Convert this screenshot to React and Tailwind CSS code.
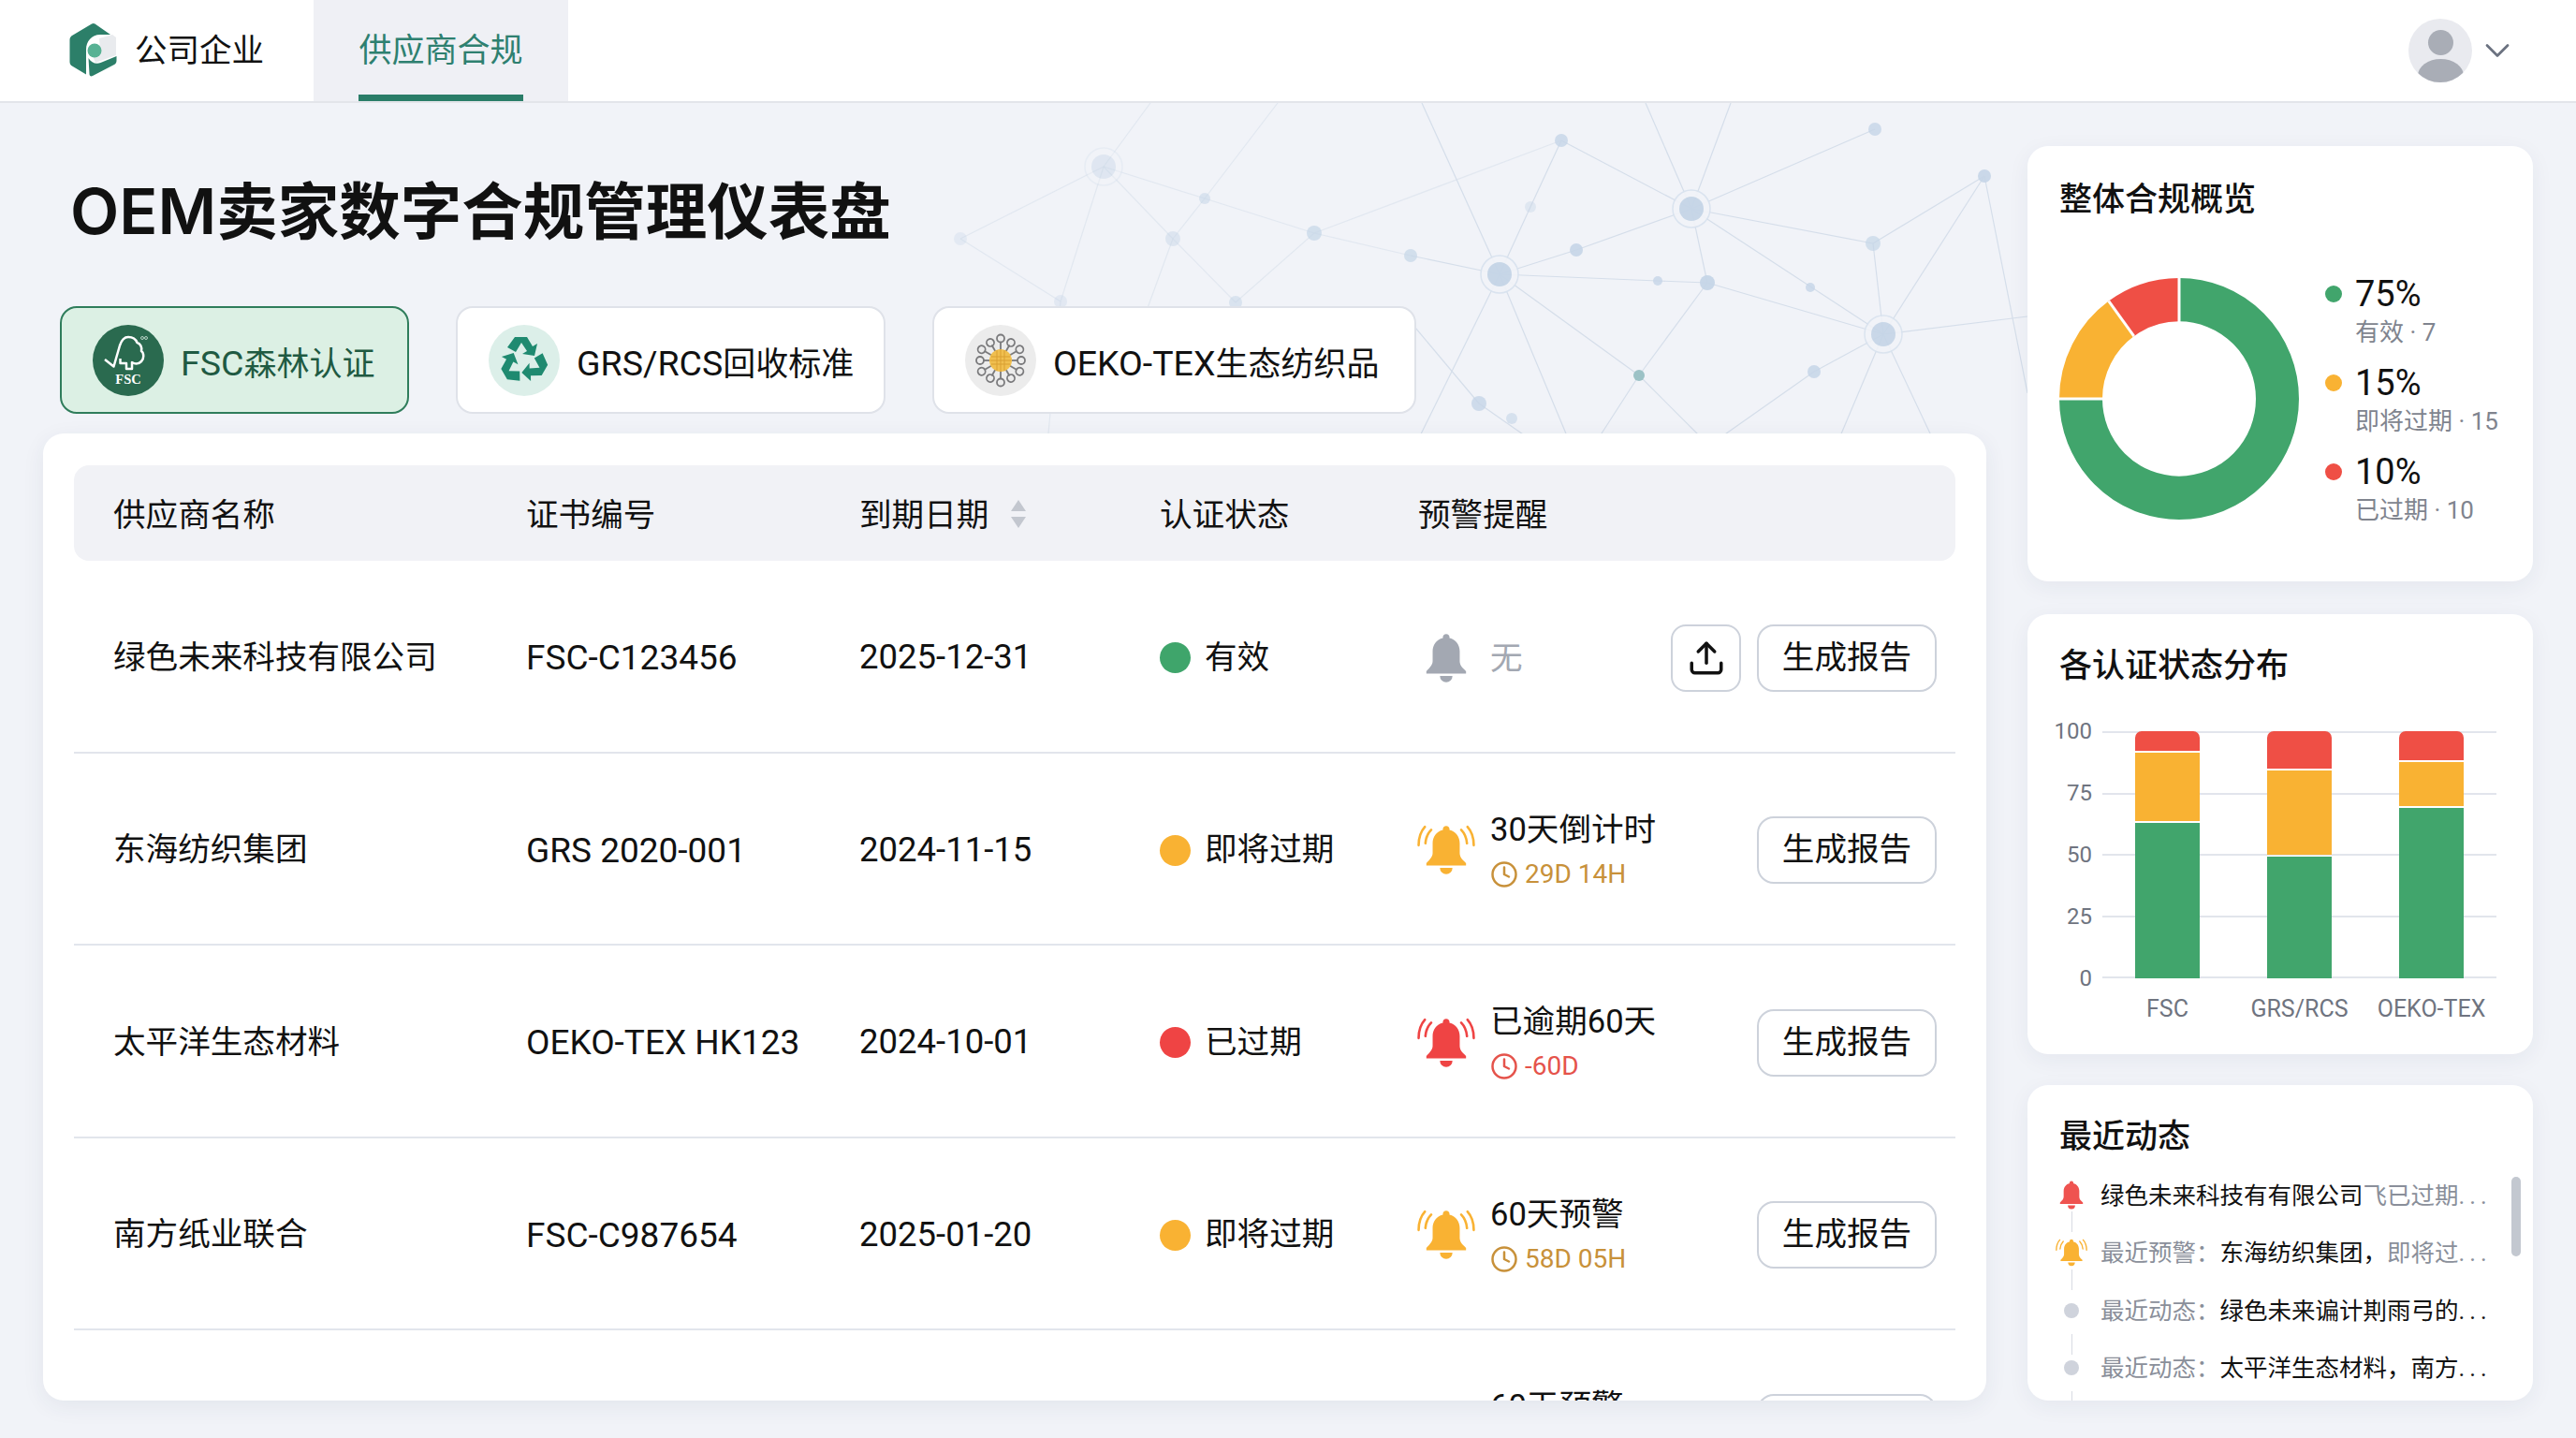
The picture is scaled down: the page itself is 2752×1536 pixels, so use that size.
import React from 'react'
import { ChevronDown, Clock, Upload } from 'lucide-react'

const nodes = [
  [1179, 178, 13, 1, 0.4], [1287, 212, 6, 0, 0.55], [1404, 249, 8, 0, 0.7], [1253, 255, 8, 0, 0.45],
  [1026, 255, 7, 0, 0.3], [1133, 322, 7, 0, 0.35], [1320, 323, 7, 0, 0.55], [1507, 273, 7, 0, 0.7],
  [1668, 150, 7, 0, 0.8], [1807, 223, 13, 1, 0.95], [2003, 138, 7, 0, 0.8], [2120, 188, 7, 0, 0.9],
  [2001, 260, 8, 0, 0.7], [1635, 221, 6, 0, 0.4], [1684, 267, 7, 0, 0.9], [1602, 293, 13, 1, 0.95],
  [1771, 300, 5, 0, 0.8], [1824, 302, 8, 0, 0.95], [1934, 307, 5, 0, 0.8], [2012, 357, 13, 1, 0.9],
  [1751, 401, 6, 0, 1], [1938, 397, 7, 0, 0.85], [1580, 431, 8, 0, 0.8], [1615, 447, 6, 0, 0.6],
]

const edges = [
  [1179, 178, 1229, 110], [1179, 178, 1026, 255], [1179, 178, 1133, 322], [1179, 178, 1253, 255], [1179, 178, 1287, 212],
  [1287, 212, 1365, 110], [1287, 212, 1253, 255], [1287, 212, 1404, 249], [1253, 255, 1320, 323], [1253, 255, 1200, 400],
  [1026, 255, 1133, 322], [1133, 322, 1120, 463], [1320, 323, 1404, 249], [1404, 249, 1668, 150], [1404, 249, 1507, 273],
  [1507, 273, 1602, 293], [1668, 150, 1807, 223], [1668, 150, 1635, 221], [1635, 221, 1602, 293], [1519, 110, 1602, 293],
  [1758, 110, 1807, 223], [1849, 110, 1807, 223], [1807, 223, 2003, 138], [1807, 223, 2001, 260], [1807, 223, 1684, 267],
  [1684, 267, 1602, 293], [1807, 223, 1824, 302], [1807, 223, 2012, 357], [1602, 293, 1771, 300], [1771, 300, 1824, 302],
  [1824, 302, 2012, 357], [1824, 302, 1751, 401], [1602, 293, 1751, 401], [1602, 293, 1510, 480], [1602, 293, 1680, 480],
  [2001, 260, 2120, 188], [2001, 260, 2012, 357], [2120, 188, 2012, 357], [2120, 188, 2166, 420], [2012, 357, 2166, 338],
  [2012, 357, 1938, 397], [1938, 397, 1820, 480], [2012, 357, 1960, 480], [2012, 357, 2070, 480], [1751, 401, 1700, 480],
  [1751, 401, 1830, 480], [1512, 350, 1580, 431], [1580, 431, 1650, 480],
]

function Network() {
  return (
    <svg className="absolute inset-0 w-[2166px] h-[1426px]" viewBox="0 110 2166 1426" fill="none">
      {edges.map(([x1, y1, x2, y2], i) => (
        <line key={i} x1={x1} y1={y1} x2={x2} y2={y2} stroke="#d5deea" strokeWidth="1.200" opacity={x1 < 1450 ? 0.55 : 1} />
      ))}
      {nodes.map(([x, y, r, ring, o], i) => (
        <g key={i} opacity={o}>
          {ring === 1 && <circle cx={x} cy={y} r={r + 7} stroke="#d9e3ef" strokeWidth="1.500" fill="#f1f3f8" />}
          <circle cx={x} cy={y} r={r} fill={i === 20 ? '#9cc2c6' : '#c5d5e7'} />
        </g>
      ))}
    </svg>
  )
}

function Logo() {
  return (
    <svg viewBox="0 0 80 75" className="w-[80px] h-[75px] shrink-0">
      <path d="M38 8.500 17 21c-1.500 1-2.500 2.500-2.500 4.500v23.500c0 2 1 3.500 2.500 4.500l15 9V36c0-9 6-16 15-16h11L41.500 8.500c-1-.800-2.500-.800-3.500 0z" fill="#2c7f69" />
      <path d="M46 24 60 20l4 3v19l-22 8-3-7c6 2 8-1 8-6z" fill="#e9ebee" />
      <circle cx="41" cy="37" r="7.500" fill="#58b294" />
      <path d="M34.500 45c3 5 8 7 13 5l17-7v5c0 1.500-.800 3-2 3.800L39 64c-2 1-3.500 0-3.500-2z" fill="#2c7f69" />
    </svg>
  )
}

function Bell({ color, ring, className }) {
  return (
    <svg viewBox="0 0 60 52" className={className} fill="none">
      <path d="M30 1c-2 0-3.400 1.400-3.400 3.200v1C19.800 6.800 16 12.500 16 19v10c0 4-2.500 6.500-6.500 10.500V42h41v-2.500C46 35.500 44 33 44 29V19c0-6.500-3.800-12.200-10.600-13.800v-1C33.400 2.400 32 1 30 1z" fill={color} />
      <path d="M23.500 44.500h13a6.500 6.500 0 0 1-13 0z" fill={color} />
      {ring && (
        <g stroke={color} strokeWidth="2.500" strokeLinecap="round">
          <path d="M8 2C3.500 7 1.500 13 1.500 21" />
          <path d="M14.500 5C10.500 9 9 13.500 8.500 19" />
          <path d="M52 2c4.500 5 6.500 11 6.500 19" />
          <path d="M45.500 5c4 4 5.500 8.500 6 14" />
        </g>
      )}
    </svg>
  )
}

function FscIcon() {
  return (
    <div className="w-[76px] h-[76px] rounded-full bg-[#2a6a4f] flex items-center justify-center shrink-0">
      <svg viewBox="0 0 76 76" className="w-[76px] h-[76px]" fill="none">
        <path d="M13 37 22.500 44.500 29 22C31 16 34 13 38 13c4 0 8 2 9.500 6 3.500 1 5.500 5 4.500 9 3 2 3 8 0 11-3 3-7 3-10 1v7h-6v-6h-6.500v-5" stroke="#fff" strokeWidth="2.500" strokeLinejoin="round" />
        <text x="38" y="63" textAnchor="middle" fill="#fff" fontSize="14.500" fontWeight="700" fontFamily="'Liberation Serif', serif">FSC</text>
        <circle cx="53" cy="14" r="1.500" stroke="#d8e8df" strokeWidth="0.800" />
        <circle cx="57" cy="14" r="1.500" stroke="#d8e8df" strokeWidth="0.800" />
      </svg>
    </div>
  )
}

function RecycleIcon() {
  const arrow = 'M28 13 41 13 47 23 52 20 49 33 36 31 41 28 35 19 29 29 20 24Z'
  return (
    <div className="w-[76px] h-[76px] rounded-full bg-[#dcefe9] flex items-center justify-center shrink-0">
      <svg viewBox="0 0 76 76" className="w-[76px] h-[76px]" fill="#1f8a70">
        <path d={arrow} />
        <path d={arrow} transform="rotate(120 37 38)" />
        <path d={arrow} transform="rotate(240 37 38)" />
      </svg>
    </div>
  )
}

function OekoIcon() {
  const angles = [0, 30, 60, 90, 120, 150, 180, 210, 240, 270, 300, 330]
  return (
    <div className="w-[76px] h-[76px] rounded-full bg-[#ececec] flex items-center justify-center shrink-0">
      <svg viewBox="0 0 76 76" className="w-[76px] h-[76px]" fill="none">
        {angles.map((a) => (
          <g key={a} transform={`rotate(${a} 38 38)`} stroke="#7a7a7c" strokeWidth="1.800">
            <circle cx="38" cy={a % 60 === 0 ? 14.500 : 16} r="4" />
            <line x1="38" y1="19" x2="38" y2="27" />
          </g>
        ))}
        <circle cx="38" cy="38" r="12" fill="#f0bf4f" />
        <path d="M28 34h20M27 38h22M28 42h20M34 27v22M38 26v24M42 27v22" stroke="#d99f32" strokeWidth="1" />
      </svg>
    </div>
  )
}

function Chip({ active, icon, latin, cn, className }) {
  return (
    <div className={`h-[115px] rounded-[18px] flex items-center gap-[18px] ${active ? 'bg-[#dcf0e4] border-2 border-[#2f7d5b] text-[#1f5a42]' : 'bg-white border-2 border-[#dfe2e9] text-[#111]'} ${className}`}>
      {icon}
      <span className="text-[35px] whitespace-nowrap pt-[7px]">
        <span className="text-[37.500px]">{latin}</span>
        {cn}
      </span>
    </div>
  )
}

const rows = [
  { name: '绿色未来科技有限公司', cert: 'FSC-C123456', date: '2025-12-31', status: '有效', dot: 'bg-[#3fa56b]', bell: '#a3a8b2', ring: false, title: '无', upload: true },
  { name: '东海纺织集团', cert: 'GRS 2020-001', date: '2024-11-15', status: '即将过期', dot: 'bg-[#f9b233]', bell: '#f9b233', ring: true, title: '30天倒计时', sub: '29D 14H', subColor: 'text-[#c8913a]' },
  { name: '太平洋生态材料', cert: 'OEKO-TEX HK123', date: '2024-10-01', status: '已过期', dot: 'bg-[#ef4444]', bell: '#ef4444', ring: true, title: '已逾期60天', sub: '-60D', subColor: 'text-[#e5534b]' },
  { name: '南方纸业联合', cert: 'FSC-C987654', date: '2025-01-20', status: '即将过期', dot: 'bg-[#f9b233]', bell: '#f9b233', ring: true, title: '60天预警', sub: '58D 05H', subColor: 'text-[#c8913a]' },
  { name: '', cert: '', date: '', status: '', dot: '', bell: '#f9b233', ring: true, title: '60天预警', sub: '58D 05H', subColor: 'text-[#c8913a]' },
]

function Row({ row }) {
  return (
    <div className="h-[205.500px] shrink-0 flex items-center border-b-2 border-[#e2e5ec] pl-[42px] pt-[4px] text-[34.600px] text-[#111]">
      <div className="w-[441px] shrink-0">{row.name}</div>
      <div className="w-[356px] shrink-0 text-[37px]">{row.cert}</div>
      <div className="w-[321px] shrink-0 text-[36.500px]">{row.date}</div>
      <div className="w-[276px] shrink-0 flex items-center gap-[15px]">
        {row.dot && <span className={`w-[33px] h-[33px] rounded-full ${row.dot}`} />}
        <span>{row.status}</span>
      </div>
      <div className="flex-1 flex items-center">
        <Bell color={row.bell} ring={row.ring} className="w-[62px] h-[54px] shrink-0 -ml-[1px]" />
        <div className="ml-[16px]">
          <div className={`leading-[46px] ${row.sub ? '' : 'text-[#a3a8b2]'}`}>{row.title}</div>
          {row.sub && (
            <div className={`flex items-center gap-[7px] text-[28px] leading-[40px] mt-[5px] ${row.subColor}`}>
              <Clock className="w-[30px] h-[30px]" strokeWidth={2} />
              {row.sub}
            </div>
          )}
        </div>
      </div>
      <div className="flex items-center gap-[17px] pr-[20px]">
        {row.upload && (
          <div className="w-[75px] h-[72px] rounded-[16px] border-2 border-[#cdd2db] flex items-center justify-center">
            <Upload className="w-[42px] h-[42px]" strokeWidth={2} />
          </div>
        )}
        <div className="w-[192px] h-[72px] rounded-[18px] border-2 border-[#cdd2db] flex items-center justify-center">生成报告</div>
      </div>
    </div>
  )
}

function Donut() {
  return (
    <svg viewBox="0 0 256 256" className="w-[256px] h-[258px] shrink-0" fill="none" preserveAspectRatio="none">
      <g transform="rotate(-90 128 128)" strokeWidth="46">
        <circle cx="128" cy="128" r="105" pathLength="100" stroke="#41a56c" strokeDasharray="75 25" />
        <circle cx="128" cy="128" r="105" pathLength="100" stroke="#f9b233" strokeDasharray="15 85" strokeDashoffset="-75" />
        <circle cx="128" cy="128" r="105" pathLength="100" stroke="#ef4f45" strokeDasharray="10 90" strokeDashoffset="-90" />
      </g>
      <g stroke="#fff" strokeWidth="3">
        <line x1="128" y1="0" x2="128" y2="47" />
        <line x1="0" y1="128" x2="47" y2="128" />
        <line x1="79.800" y1="61.700" x2="52.800" y2="24.400" />
      </g>
    </svg>
  )
}

const legend = [
  { pct: '75%', label: '有效 · 7', dot: 'bg-[#41a56c]' },
  { pct: '15%', label: '即将过期 · 15', dot: 'bg-[#f9b233]' },
  { pct: '10%', label: '已过期 · 10', dot: 'bg-[#ef4f45]' },
]

const bars = [
  { name: 'FSC', green: 64, orange: 28, red: 8 },
  { name: 'GRS/RCS', green: 50, orange: 34.500, red: 15.500 },
  { name: 'OEKO-TEX', green: 70, orange: 18, red: 12 },
]

const activity = [
  { icon: 'red', parts: [['绿色未来科技有有限公司', 'text-[#111]'], ['飞已过期', 'text-[#8a8f9a]']], dots: 'text-[#8a8f9a]' },
  { icon: 'orange', parts: [['最近预警：', 'text-[#8a8f9a]'], ['东海纺织集团，', 'text-[#111]'], ['即将过', 'text-[#8a8f9a]']], dots: 'text-[#8a8f9a]' },
  { icon: 'dot', parts: [['最近动态：', 'text-[#8a8f9a]'], ['绿色未来谝计剘雨弓的', 'text-[#111]']], dots: 'text-[#111]' },
  { icon: 'dot', parts: [['最近动态：', 'text-[#8a8f9a]'], ['太平洋生态材料，南方', 'text-[#111]']], dots: 'text-[#111]' },
]

function Panel({ className, children }) {
  return <section className={`bg-white rounded-[22px] shadow-[0_6px_24px_rgba(40,50,80,0.06)] shrink-0 ${className}`}>{children}</section>
}

export default function App() {
  return (
    <div className="w-[2752px] h-[1536px] overflow-hidden bg-[#f1f3f8] flex flex-col font-['Roboto','Noto_Sans_CJK_SC',sans-serif] text-[#111]">
      <header className="h-[110px] shrink-0 bg-white border-b-2 border-[#e3e5ea] flex items-stretch">
        <div className="w-[335px] flex items-center pl-[60px] gap-[4px]">
          <Logo />
          <span className="text-[34.500px] whitespace-nowrap pt-[2px]">公司企业</span>
        </div>
        <div className="w-[272px] bg-[#eff0f5] flex justify-center items-center relative">
          <span className="text-[35px] text-[#2e8070] pt-[2px]">供应商合规</span>
          <div className="absolute left-[48px] bottom-0 w-[176px] h-[7px] bg-[#2a7d68]" />
        </div>
        <div className="ml-auto flex items-center pr-[62px] gap-[5px]">
          <div className="w-[68px] h-[68px] rounded-full bg-[#e9eaef] overflow-hidden relative">
            <div className="absolute left-[21px] top-[12px] w-[27px] h-[27px] rounded-full bg-[#a9adb6]" />
            <div className="absolute left-[10px] top-[43px] w-[49px] h-[36px] rounded-[50%] bg-[#a9adb6]" />
          </div>
          <ChevronDown className="w-[44px] h-[44px] text-[#6b7280]" strokeWidth={1.500} />
        </div>
      </header>

      <main className="flex-1 flex relative min-h-0">
        <Network />

        <div className="w-[2122px] relative flex flex-col pl-[46px]">
          <h1 className="text-[65.500px] font-semibold leading-[90px] mt-[70px] ml-[29px] whitespace-nowrap">
            <span className="text-[68px] font-['Inter','Noto_Sans_CJK_SC',sans-serif]">OEM</span>卖家数字合规管理仪表盘
          </h1>
          <div className="flex mt-[54px] ml-[18px] gap-[50px]">
            <Chip active icon={<FscIcon />} latin="FSC" cn="森林认证" className="w-[373px] pl-[33px]" />
            <Chip icon={<RecycleIcon />} latin="GRS/RCS" cn="回收标准" className="w-[459px] pl-[33px]" />
            <Chip icon={<OekoIcon />} latin="OEKO-TEX" cn="生态纺织品" className="w-[517px] pl-[33px]" />
          </div>
          <div className="mt-[21px] h-[1033px] bg-white rounded-[22px] shadow-[0_6px_24px_rgba(40,50,80,0.07)] pt-[34px] px-[33px] overflow-hidden flex flex-col">
            <div className="h-[102px] shrink-0 rounded-[16px] bg-[#f1f2f6] flex items-center pl-[42px] pt-[5px] text-[34.600px] text-[#111]">
              <div className="w-[441px]">供应商名称</div>
              <div className="w-[356px]">证书编号</div>
              <div className="w-[321px] flex items-center gap-[21px]">
                到期日期
                <svg viewBox="0 0 20 32" className="w-[22px] h-[32px] -mt-[3px]">
                  <path d="M10 1 18 13H2z" fill="#c3c7cf" />
                  <path d="M10 31 2 19h16z" fill="#c3c7cf" />
                </svg>
              </div>
              <div className="w-[276px]">认证状态</div>
              <div>预警提醒</div>
            </div>
            {rows.map((row, i) => (
              <Row key={i} row={row} />
            ))}
          </div>
        </div>

        <aside className="w-[540px] ml-[44px] relative flex flex-col pt-[46px]">
          <Panel className="h-[465px] px-[34px]">
            <h2 className="text-[35px] font-medium leading-[50px] mt-[33px]">整体合规概览</h2>
            <div className="flex mt-[58px]">
              <Donut />
              <div className="ml-[28px] flex flex-col -mt-[6px]">
                {legend.map((l) => (
                  <div key={l.pct} className="h-[95px]">
                    <div className="flex items-center gap-[14px]">
                      <span className={`w-[18px] h-[18px] rounded-full ${l.dot}`} />
                      <span className="text-[38px] leading-[46px]">{l.pct}</span>
                    </div>
                    <div className="text-[26px] leading-[36px] text-[#80848e] ml-[32px] whitespace-nowrap">{l.label}</div>
                  </div>
                ))}
              </div>
            </div>
          </Panel>

          <Panel className="h-[470px] mt-[35px] px-[34px]">
            <h2 className="text-[35px] font-medium leading-[50px] mt-[31px]">各认证状态分布</h2>
            <div className="flex mt-[44px]">
              <div className="w-[35px] h-[294px] -my-[15px] flex flex-col justify-between items-end text-[24px] leading-[30px] text-[#6f7480]">
                <span>100</span>
                <span>75</span>
                <span>50</span>
                <span>25</span>
                <span>0</span>
              </div>
              <div className="w-[421px] ml-[11px] h-[264px] relative">
                <div className="absolute inset-0 flex flex-col justify-between">
                  {[0, 1, 2, 3, 4].map((i) => (
                    <div key={i} className="h-[2px] bg-[#e2e5ec]" />
                  ))}
                </div>
                <div className="absolute inset-0 flex pl-[35px] gap-[72px]">
                  {bars.map((b) => (
                    <div key={b.name} className="w-[69px] h-[264px] flex flex-col gap-[2px]">
                      <div className="rounded-t-[7px] bg-[#ef4f45]" style={{ height: `${b.red}%` }} />
                      <div className="bg-[#f9b233]" style={{ height: `${b.orange}%` }} />
                      <div className="bg-[#41a56c]" style={{ height: `${b.green}%` }} />
                    </div>
                  ))}
                </div>
              </div>
            </div>
            <div className="flex ml-[81px] gap-[72px] mt-[17px] text-[25px] leading-[32px] text-[#6f7480]">
              {bars.map((b) => (
                <div key={b.name} className="w-[69px] flex justify-center whitespace-nowrap">{b.name}</div>
              ))}
            </div>
          </Panel>

          <Panel className="h-[337px] mt-[33px] px-[34px] relative overflow-hidden">
            <h2 className="text-[35px] font-medium leading-[50px] mt-[31px]">最近动态</h2>
            <div className="mt-[6px]">
              {activity.map((a, i) => (
                <div key={i} className="h-[61.500px] flex items-center">
                  <div className="w-[26px] relative flex justify-center shrink-0">
                    {a.icon === 'red' && <Bell color="#ef5350" className="w-[36px] h-[31px] shrink-0" />}
                    {a.icon === 'orange' && <Bell color="#f9b233" ring className="w-[34px] h-[30px] shrink-0" />}
                    {a.icon === 'dot' && <span className="w-[16px] h-[16px] rounded-full bg-[#cfd3dc]" />}
                    <div className="absolute left-[12.500px] top-[33px] w-px h-[22px] bg-[#d8dbe2]" />
                  </div>
                  <div className="ml-[18px] text-[25.500px] whitespace-nowrap">
                    {a.parts.map(([t, c], j) => (
                      <span key={j} className={c}>{t}</span>
                    ))}
                    <span className={`tracking-[5px] ${a.dots}`}>...</span>
                  </div>
                </div>
              ))}
            </div>
            <div className="absolute left-[517px] top-[98px] w-[10px] h-[85px] rounded-full bg-[#c3c8d0]" />
          </Panel>
        </aside>
      </main>
    </div>
  )
}
